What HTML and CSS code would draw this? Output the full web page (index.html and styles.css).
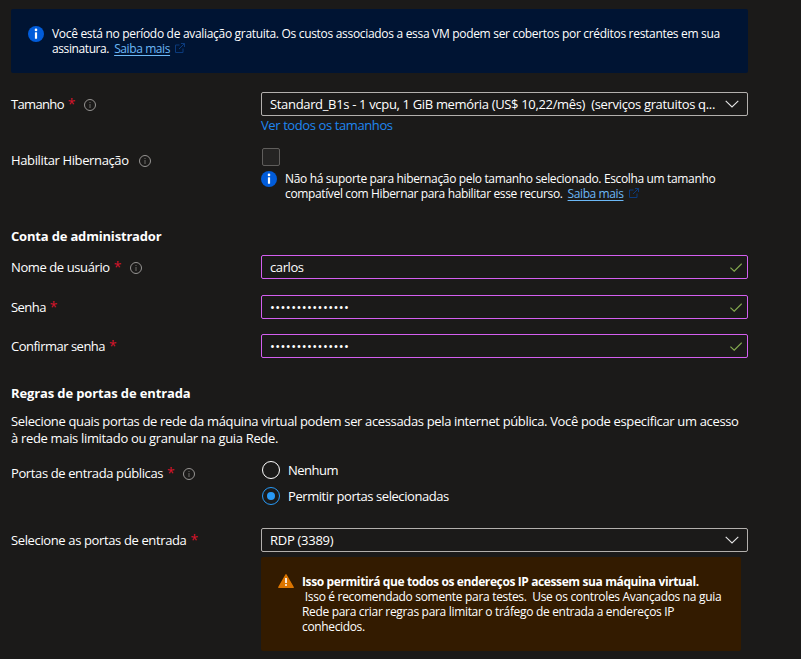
FILE: index.html
```html
<!DOCTYPE html>
<html lang="pt-BR">
<head>
<meta charset="utf-8">
<title>Criar máquina virtual</title>
<link rel="stylesheet" href="styles.css">
</head>
<body>
<svg class="defs" width="0" height="0">
  <symbol id="info" viewBox="0 0 16 16"><circle cx="8" cy="8" r="8" fill="#015cda"/><circle cx="8" cy="3.9" r="1.3" fill="#fff"/><rect x="6.900" y="6.2" width="2.200" height="6.6" rx=".6" fill="#fff"/></symbol>
  <symbol id="hint" viewBox="0 0 12 12"><circle cx="6" cy="6" r="5.5" fill="none" stroke="#979593"/><path d="M6 5v4M6 3v1" stroke="#6f6d6b"/></symbol>
  <symbol id="ext" viewBox="0 0 10 10"><path d="M4.5 2H.5v7.5H8V5.5M6 .5h3.500v3.500M9.500.5 4 6" fill="none" stroke="#0b3a7c"/></symbol>
  <symbol id="chev" viewBox="0 0 14 8"><path d="M.7.800 7 7 13.300.800" fill="none" stroke="#e6e6e6" stroke-width="1.100"/></symbol>
  <symbol id="check" viewBox="0 0 12 9"><path d="M.4 4.600 4.200 8.200 11.700.6" fill="none" stroke="#83a84f" stroke-width="1.200"/></symbol>
</svg>
<main class="form">
  <section class="banner">
    <svg class="i16"><use href="#info"/></svg>
    <p class="note"><span class="n1">Você está no período de avaliação gratuita. Os custos associados a essa VM podem ser cobertos por créditos restantes em sua</span><br><span class="n2">assinatura.</span><a class="learn">Saiba mais</a><svg class="ext"><use href="#ext"/></svg></p>
  </section>

  <div class="row size">
    <div class="label"><span class="l-size">Tamanho</span><b class="req">*</b><svg class="hint"><use href="#hint"/></svg></div>
    <div class="control">
      <div class="field select"><span class="v-size">Standard_B1s - 1 vcpu, 1 GiB memória (US$ 10,22/mês)&nbsp; (serviços gratuitos q...</span><svg class="chev"><use href="#chev"/></svg></div>
      <a class="all"><span class="v-all">Ver todos os tamanhos</span></a>
    </div>
  </div>

  <div class="row hib">
    <div class="label"><span class="l-hib">Habilitar Hibernação</span><svg class="hint"><use href="#hint"/></svg></div>
    <div class="control">
      <div class="checkbox"></div>
      <div class="support">
        <svg class="i16"><use href="#info"/></svg>
        <p class="note"><span class="s1">Não há suporte para hibernação pelo tamanho selecionado. Escolha um tamanho</span><br><span class="s2">compatível com Hibernar para habilitar esse recurso.</span><a class="learn">Saiba mais</a><svg class="ext"><use href="#ext"/></svg></p>
      </div>
    </div>
  </div>

  <h2 class="h-admin"><span class="t-admin">Conta de administrador</span></h2>
  <div class="row user">
    <div class="label"><span class="l-user">Nome de usuário</span><b class="req">*</b><svg class="hint"><use href="#hint"/></svg></div>
    <div class="control field valid"><span class="v-user">carlos</span><svg class="check"><use href="#check"/></svg></div>
  </div>
  <div class="row pass">
    <div class="label"><span class="l-pass">Senha</span><b class="req">*</b></div>
    <div class="control field valid"><span class="dots">•••••••••••••••</span><svg class="check"><use href="#check"/></svg></div>
  </div>
  <div class="row conf">
    <div class="label"><span class="l-conf">Confirmar senha</span><b class="req">*</b></div>
    <div class="control field valid"><span class="dots">•••••••••••••••</span><svg class="check"><use href="#check"/></svg></div>
  </div>

  <h2 class="h-rules"><span class="t-rules">Regras de portas de entrada</span></h2>
  <p class="desc"><span class="d1">Selecione quais portas de rede da máquina virtual podem ser acessadas pela internet pública. Você pode especificar um acesso</span><br><span class="d2">à rede mais limitado ou granular na guia Rede.</span></p>

  <div class="row ports">
    <div class="label"><span class="l-ports">Portas de entrada públicas</span><b class="req">*</b><svg class="hint"><use href="#hint"/></svg></div>
    <div class="control radios">
      <div class="radio"><i class="dot"></i><span class="r1">Nenhum</span></div>
      <div class="radio on"><i class="dot"></i><span class="r2">Permitir portas selecionadas</span></div>
    </div>
  </div>

  <div class="row sel">
    <div class="label"><span class="l-sel">Selecione as portas de entrada</span><b class="req">*</b></div>
    <div class="control">
      <div class="field select"><span class="v-rdp">RDP (3389)</span><svg class="chev"><use href="#chev"/></svg></div>
      <div class="warning">
        <svg class="tri" viewBox="0 0 16 14"><path d="M8 .8 15.200 13.300H.8Z" fill="#db7500" stroke="#db7500" stroke-width="1.400" stroke-linejoin="round"/><path d="M8 4v5" stroke="#fff" stroke-width="1.700"/><circle cx="8" cy="11" r="1" fill="#fff"/></svg>
        <p class="note"><strong class="w1">Isso permitirá que todos os endereços IP acessem sua máquina virtual.</strong><br><span class="w2">&nbsp;Isso é recomendado somente para testes.&nbsp; Use os controles Avançados na guia</span><br><span class="w3">Rede para criar regras para limitar o tráfego de entrada a endereços IP</span><br><span class="w4">conhecidos.</span></p>
      </div>
    </div>
  </div>
</main>
</body>
</html>
```
FILE: styles.css
```css
* { box-sizing: border-box; }
body { margin: 0; height: 659px; overflow: hidden; background: #1b1a19; color: #fff; font: 13px/16px "Open Sans", "Noto Sans", sans-serif; }
.defs { display: none; }
svg { flex: none; }
p, h2 { margin: 0; }
span, strong, a { white-space: pre; }
.form { width: 737px; margin-left: 11px; padding-top: 9px; }
.i16 { width: 16px; height: 16px; }
.note { font-size: 12px; line-height: 15px; }
.learn { color: #6cb8f6; text-decoration: underline; text-underline-offset: 2px; margin-left: 5px; letter-spacing: -.4px; }
.ext { width: 10px; height: 10px; margin-left: 5px; }
.banner { display: flex; gap: 8px; height: 64px; padding: 17px 17px; background: #001433; border-radius: 2px; }

.row { display: flex; }
.label { width: 250px; flex: none; display: flex; align-items: center; height: 24px; }
.control { flex: 1; min-width: 0; }
.req { color: #d8142b; font-weight: 400; font-size: 14px; width: 7px; margin-left: 4px; }
.hint { width: 12px; height: 12px; margin-left: 9px; margin-top: 2px; }
.l-hib + .hint { margin-left: 10px; }
.field { height: 24px; border: 1px solid #b3b0ad; border-radius: 2px; display: flex; align-items: center; justify-content: space-between; padding: 0 8px; }
.valid { border-color: #d45ff0; padding-right: 5px; }
.chev { width: 14px; height: 8px; }
.check { width: 12px; height: 9px; }
.size { margin-top: 19px; height: 56px; }
.all { display: block; color: #1f87f0; margin-top: 1px; }
.hib { height: 76px; }
.checkbox { width: 18px; height: 18px; margin-left: 1px; border: 1px solid #605e5c; border-radius: 2px; background: #252423; }
.support { display: flex; gap: 8px; margin-top: 5px; }
h2 { font-size: 13px; line-height: 18px; font-weight: 700; }
.h-admin { margin-top: 3px; height: 28px; }
.user { height: 40px; }
.pass { height: 39px; }
.conf { height: 50px; }
.h-rules { height: 29px; }
.desc { line-height: 17px; height: 48px; }
.ports { height: 67px; }
.radios { padding: 0 1px; }
.radio { display: flex; align-items: center; gap: 8px; height: 18px; margin-bottom: 8px; }
.dot { width: 18px; height: 18px; border: 1px solid #fff; border-radius: 50%; display: grid; place-items: center; }
.on .dot { border-color: #2899f5; }
.on .dot::after { content: ""; width: 8px; height: 8px; border-radius: 50%; background: #2899f5; }
.warning { display: flex; gap: 8px; width: 480px; height: 94px; margin-top: 5px; padding: 17px 17px; background: #331b00; border-radius: 2px; }
.tri { width: 16px; height: 14px; }

/* Tracking per line of text */
.n1 { letter-spacing: -.309px; }
.n2 { letter-spacing: -.4px; }
.v-size { letter-spacing: -.333px; }
.v-all { letter-spacing: -.4px; }
.l-size { letter-spacing: -.65px; }
.l-hib { letter-spacing: -.37px; }
.s1 { letter-spacing: -.353px; }
.s2 { letter-spacing: -.36px; }
.t-admin { letter-spacing: -.18px; }
.l-user { letter-spacing: -.4px; }
.v-user { letter-spacing: -.4px; }
.l-pass { letter-spacing: -.55px; }
.l-conf { letter-spacing: -.5px; }
.dots { letter-spacing: .4px; }
.t-rules { letter-spacing: -.13px; }
.d1 { letter-spacing: -.352px; }
.d2 { letter-spacing: -.33px; }
.l-ports { letter-spacing: -.385px; }
.r1 { letter-spacing: -.5px; }
.r2 { letter-spacing: -.43px; }
.l-sel { letter-spacing: -.37px; }
.v-rdp { letter-spacing: -.28px; }
.w1 { letter-spacing: -.39px; }
.w2 { letter-spacing: -.315px; }
.w3 { letter-spacing: -.32px; }
.w4 { letter-spacing: -.35px; }
```
